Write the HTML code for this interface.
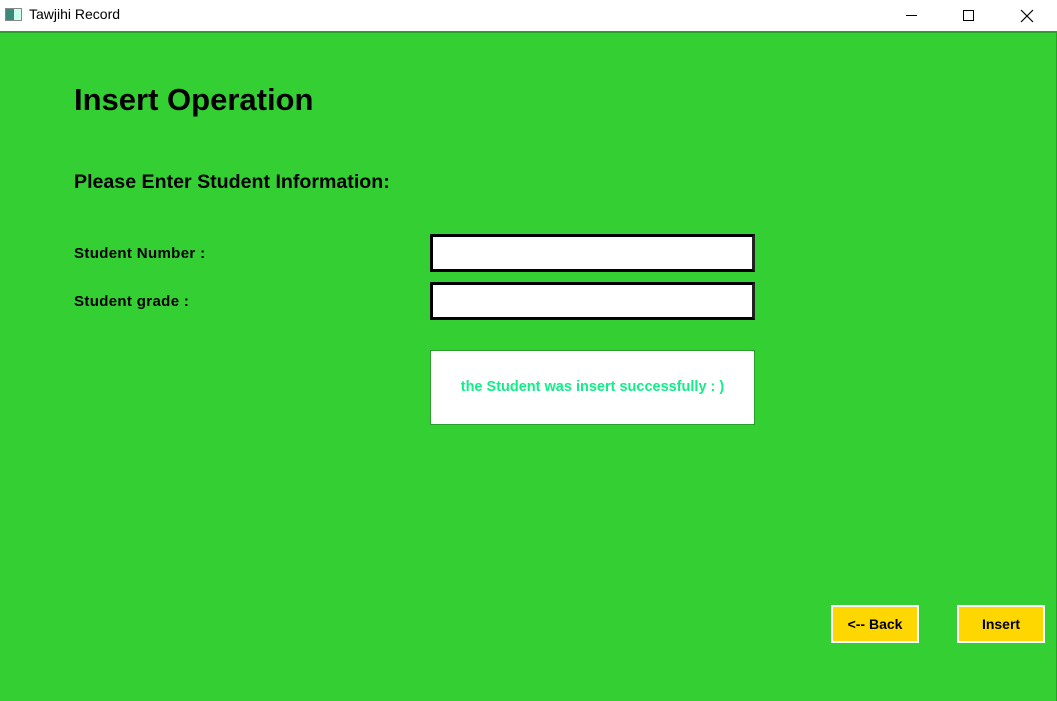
<!DOCTYPE html>
<html><head><meta charset="utf-8"><style>
*{margin:0;padding:0;box-sizing:border-box}
body{width:1057px;height:701px;overflow:hidden;background:#fff;font-family:"Liberation Sans",sans-serif;position:relative}
.tb{position:absolute;left:0;top:0;width:1057px;height:31px;background:#fff}
.tb .t{position:absolute;left:29px;top:6px;font-size:14px;color:#000}
.ic{position:absolute;left:5px;top:8px;width:17px;height:13px;border:1px solid #888;background:linear-gradient(90deg,#3a8a7a 0 55%,#cfe 55%)}
.ctl{position:absolute;top:0;height:31px;width:46px;display:flex;align-items:center;justify-content:center}
.main{position:absolute;left:0;top:31px;width:1057px;height:670px;background:#33cf33;border-top:2px solid #2a9f2a;border-right:1px solid #2a9f2a}
.a{position:absolute;color:#000;font-weight:bold;white-space:nowrap}
.in{position:absolute;left:430px;width:325px;height:38px;background:#fff;border:3px solid #000;border-right-color:#222;}
.box{position:absolute;left:430px;top:350px;width:325px;height:75px;background:#fff;border:1px solid #2a9f2a;color:#11ee88;font-weight:bold;font-size:14.5px;text-align:center;line-height:73px}
.btn{position:absolute;top:605px;width:88px;height:38px;background:#ffd700;border:2px solid #fff;font-weight:bold;font-size:14px;text-align:center;line-height:34px}
</style></head><body>
<div class="tb"><div class="ic"></div><div class="t">Tawjihi Record</div>
<div class="ctl" style="left:888px"><div style="width:11px;height:1px;background:#000"></div></div>
<div class="ctl" style="left:945px"><div style="width:11px;height:11px;border:1px solid #000"></div></div>
<div class="ctl" style="left:1004px"><svg width="14" height="14"><path d="M1 1L13 13M13 1L1 13" stroke="#000" stroke-width="1.2"/></svg></div>
</div>
<div class="main"></div>
<div class="a" style="left:74px;top:82px;font-size:31px">Insert Operation</div>
<div class="a" style="left:74px;top:171px;font-size:19.6px">Please Enter Student Information:</div>
<div class="a" style="left:74px;top:245px;font-size:15px;letter-spacing:0.35px">Student Number :</div>
<div class="a" style="left:74px;top:293px;font-size:15px;letter-spacing:0.35px">Student grade :</div>
<div class="in" style="top:234px"></div>
<div class="in" style="top:282px"></div>
<div class="box">the Student was insert successfully : )</div>
<div class="btn" style="left:831px">&lt;-- Back</div>
<div class="btn" style="left:957px">Insert</div>
</body></html>
